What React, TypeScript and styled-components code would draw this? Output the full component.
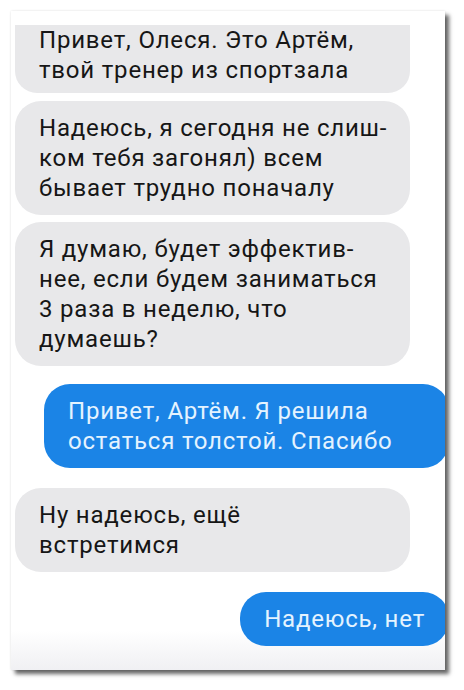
import React from "react";
import styled, { createGlobalStyle } from "styled-components";

const Global = createGlobalStyle`
  html, body { margin: 0; padding: 0; background: #ffffff; }
  body { font-family: Roboto, "Noto Sans", "Liberation Sans", sans-serif; }
`;

const Page = styled.div`
  width: 464px;
  height: 690px;
  padding: 11px 0 0 11px;
  box-sizing: border-box;
`;

const Card = styled.div`
  width: 434px;
  height: 659px;
  box-sizing: border-box;
  padding-top: 14px;
  overflow: hidden;
  background: linear-gradient(to bottom, #ffffff 0%, #ffffff 94%, #f0f0f3 100%);
  box-shadow: 4px 4px 4px rgba(0, 0, 0, 0.6), 0 0 2px rgba(0, 0, 0, 0.12);
`;

const Thread = styled.div`
  display: flex;
  flex-direction: column;
  padding-left: 4px;
  margin-right: -4px;
`;

const Row = styled.div<{ $out?: boolean; $gap: number }>`
  display: flex;
  justify-content: ${(p) => (p.$out ? "flex-end" : "flex-start")};
  margin-top: ${(p) => p.$gap}px;
`;

const Bubble = styled.div<{ $out?: boolean; $cut?: boolean; $w?: number }>`
  box-sizing: border-box;
  ${(p) => (p.$w ? `width: ${p.$w}px;` : "")}
  padding: ${(p) => (p.$cut ? "0 24px 8px" : "12px 24px")};
  border-radius: ${(p) => (p.$cut ? "0 0 22px 22px" : "26px")};
  background: ${(p) => (p.$out ? "#1b84e6" : "#e8e8ea")};
  color: ${(p) => (p.$out ? "#e4f3ff" : "#161616")};
  font-size: 24px;
  letter-spacing: 0.8px;
  line-height: 30px;
  white-space: nowrap;
`;

type Msg = { out?: boolean; lines: string[]; gap: number; w?: number; cut?: boolean };

const messages: Msg[] = [
  { lines: ["Привет, Олеся. Это Артём,", "твой тренер из спортзала"], gap: 0, w: 395, cut: true },
  { lines: ["Надеюсь, я сегодня не слиш-", "ком тебя загонял) всем", "бывает трудно поначалу"], gap: 8, w: 395 },
  { lines: ["Я думаю, будет эффектив-", "нее, если будем заниматься", "3 раза в неделю, что", "думаешь?"], gap: 7, w: 395 },
  { out: true, lines: ["Привет, Артём. Я решила", "остаться толстой. Спасибо"], gap: 18, w: 405 },
  { lines: ["Ну надеюсь, ещё", "встретимся"], gap: 20, w: 395 },
  { out: true, lines: ["Надеюсь, нет"], gap: 20 },
];

export default function App() {
  return (
    <>
      <Global />
      <Page>
        <Card>
          <Thread>
            {messages.map((m, i) => (
              <Row key={i} $out={m.out} $gap={m.gap}>
                <Bubble $out={m.out} $cut={m.cut} $w={m.w}>
                  {m.lines.map((l, j) => (
                    <React.Fragment key={j}>
                      {j > 0 && <br />}
                      {l}
                    </React.Fragment>
                  ))}
                </Bubble>
              </Row>
            ))}
          </Thread>
        </Card>
      </Page>
    </>
  );
}
